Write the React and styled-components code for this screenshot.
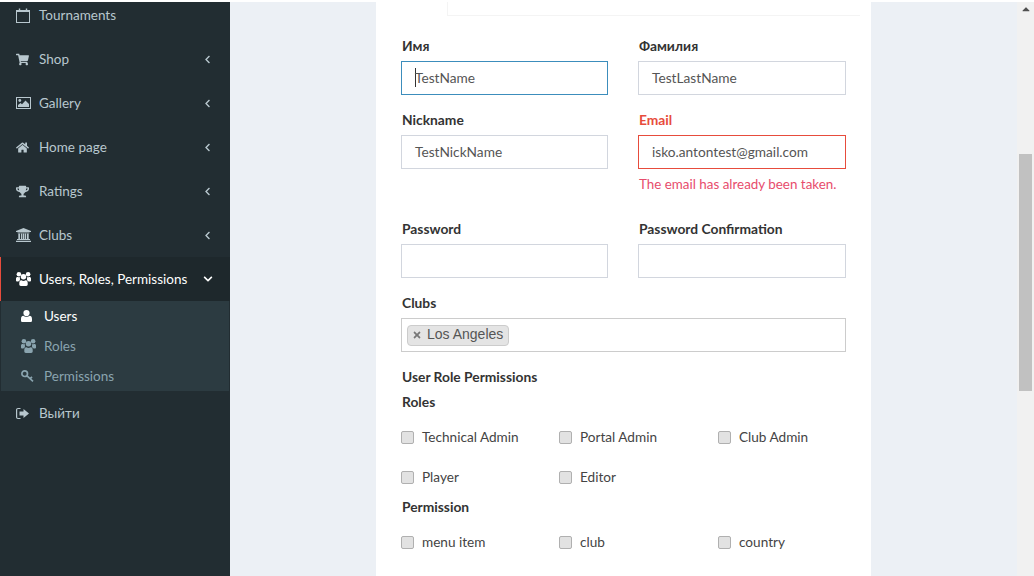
import React from 'react';
import styled, { createGlobalStyle } from 'styled-components';
import {
  FaShoppingCart,
  FaHome,
  FaTrophy,
  FaChevronLeft,
  FaChevronDown,
  FaTimes,
  FaCaretUp,
} from 'react-icons/fa';

const GlobalStyle = createGlobalStyle`
  html, body {
    margin: 0;
    height: 100%;
    overflow: hidden;
    background: #fff;
  }
  body {
    font-family: 'Lato', 'Noto Sans', sans-serif;
    font-size: 14px;
    color: #333;
  }
`;

const Page = styled.div`
  display: flex;
  flex-direction: column;
  width: 1034px;
  height: 576px;
  overflow: hidden;
`;

const Body = styled.div`
  display: flex;
  flex: 1;
  min-height: 0;
  margin-top: 2px;
`;

const Sidebar = styled.nav`
  width: 230px;
  flex-shrink: 0;
  background: #222d32;
`;

const MenuItem = styled.div`
  display: flex;
  align-items: center;
  box-sizing: border-box;
  height: 44px;
  padding-left: ${p => (p.active ? '15px' : '16px')};
  padding-right: 18px;
  border-left: ${p => (p.active ? '1px solid #e74c3c' : '0')};
  background: ${p => (p.active ? '#1e282c' : 'transparent')};
  color: ${p => (p.active ? '#fff' : '#b8c7ce')};
  font-size: 13.5px;
`;

const FirstItem = styled(MenuItem)`
  height: 35px;
  padding-bottom: 9px;
`;

const MenuIcon = styled.span`
  display: flex;
  align-items: center;
  width: 15px;
  margin-right: 8px;
  font-size: 13px;
`;

const MenuLabel = styled.span`
  flex: 1;
  white-space: nowrap;
`;

const Chevron = styled.span`
  display: flex;
  margin-right: ${p => p.mr || 0}px;
  font-size: ${p => p.size || 9}px;
`;

const SubMenu = styled.div`
  background: #2c3b41;
  margin: 0 1px;
`;

const SubItem = styled.div`
  display: flex;
  align-items: center;
  height: 30px;
  padding-left: 20px;
  color: ${p => (p.active ? '#fff' : '#8aa4af')};
  font-size: 13.5px;
`;

const SubIcon = styled.span`
  display: flex;
  align-items: center;
  width: 15px;
  margin-right: 8px;
`;

const Content = styled.main`
  flex: 1;
  background: #ecf0f5;
  padding: 0 146px;
  min-width: 0;
`;

const Card = styled.section`
  background: #fff;
  height: 100%;
  padding: 0 25px;
`;

const TabStrip = styled.div`
  height: 13px;
  margin: 0 -14px 0 46px;
  border-left: 1px solid #f4f4f4;
  border-bottom: 1px solid #f4f4f4;
`;

const FormGrid = styled.div`
  display: grid;
  grid-template-columns: 207px 208px;
  column-gap: 30px;
  margin-top: 20px;
`;

const Field = styled.div`
  margin-bottom: ${p => p.mb || 15}px;
`;

const Label = styled.label`
  display: block;
  padding-left: 1px;
  font-weight: 700;
  font-size: 13.8px;
  line-height: 20px;
  height: 20px;
  margin-bottom: 5px;
  color: ${p => (p.error ? '#e74c3c' : '#333')};
`;

const Input = styled.div`
  display: flex;
  align-items: center;
  box-sizing: border-box;
  height: 34px;
  padding: 0 12px 2px 13px;
  border: 1px solid ${p => p.border || '#d2d6de'};
  color: #555;
  font-size: 13.7px;
  white-space: nowrap;
`;

const Caret = styled.span`
  display: inline-block;
  width: 1px;
  height: 19px;
  margin-right: -1px;
  background: #333;
`;

const HelpText = styled.div`
  padding-left: 1px;
  font-size: 13.4px;
  line-height: 20px;
  margin-top: 5px;
  color: #e74c6c;
`;

const Select = styled.div`
  display: flex;
  align-items: center;
  box-sizing: border-box;
  height: 34px;
  padding: 0 5px;
  border: 1px solid #ccc;
`;

const Tag = styled.span`
  display: inline-flex;
  align-items: center;
  box-sizing: border-box;
  height: 21px;
  padding: 0 5px 2px 4px;
  background: #e4e4e4;
  border: 1px solid #ccc;
  border-radius: 4px;
  font-family: 'Liberation Sans', Arial, sans-serif;
  font-size: 14px;
  color: #555;
`;

const TagRemove = styled.span`
  display: flex;
  margin: 2px 5px 0 0;
  font-size: 10px;
  color: #777;
`;

const Heading = styled.div`
  padding-left: 1px;
  font-weight: 700;
  font-size: 13.8px;
  line-height: 20px;
  margin-top: ${p => p.mt || 0}px;
`;

const CheckGrid = styled.div`
  display: grid;
  grid-template-columns: 158px 159px 1fr;
  grid-auto-rows: 40px;
  margin-top: ${p => p.mt || 0}px;
`;

const CheckRow = styled.label`
  display: flex;
  align-items: center;
  font-size: 13.6px;
  color: #444;
`;

const Check = styled.span`
  box-sizing: border-box;
  width: 13px;
  height: 13px;
  margin-right: 8px;
  background: #e2e2e2;
  border: 1px solid #b0b0b0;
  border-radius: 2px;
`;

const CheckText = styled.span`
  margin-top: -1px;
`;

const Scrollbar = styled.aside`
  display: flex;
  flex-direction: column;
  align-items: center;
  width: 17px;
  flex-shrink: 0;
  background: #f1f1f1;
`;

const ScrollArrow = styled.span`
  display: flex;
  margin-top: 1px;
  font-size: 12px;
  color: #505050;
`;

const ScrollThumb = styled.span`
  width: 13px;
  height: 237px;
  margin-top: 139px;
  background: #c1c1c1;
`;

const CalendarIcon = () => (
  <svg width="14" height="15" viewBox="0 0 14 15" fill="none" stroke="currentColor">
    <rect x="0.5" y="2.5" width="13" height="12" />
    <path d="M0.500 3.500h13" />
    <path d="M3.500 0.500v3M10.500 0.500v3" strokeWidth="1.400" />
  </svg>
);

const PictureIcon = () => (
  <svg width="15" height="12" viewBox="0 0 15 12" fill="currentColor">
    <rect x="0.500" y="0.500" width="14" height="11" fill="none" stroke="currentColor" />
    <circle cx="3.800" cy="3.500" r="1.400" />
    <path d="M2 10V8l2.500-2 1.500 1.300L9.500 3.500 13 7v3z" />
  </svg>
);

const BankIcon = () => (
  <svg width="15" height="14" viewBox="0 0 15 14" fill="currentColor">
    <path d="M7.500 0 15 3v1H0V3z" />
    <path d="M1.500 4.500h12v.8h-12zM1 11h13v1H1zM0 12.700h15V14H0z" />
    <path d="M2.300 5.500h1.800V11H2.300zM5 5.500h1.300V11H5zM6.900 5.500h1.300V11H6.900zM8.800 5.500h1.300V11H8.800zM10.900 5.500h1.800V11h-1.800z" />
  </svg>
);

const UsersIcon = () => (
  <svg width="15" height="14" viewBox="0 0 15 14" fill="currentColor">
    <circle cx="2.900" cy="2.300" r="2.300" />
    <circle cx="12.100" cy="2.300" r="2.300" />
    <path d="M0 8.800V6.600C0 5.400.7 4.800 1.800 4.900c.5.300 1.300.6 2.400.4-.3.900-.5 2-.1 3C3.400 8.500 2.800 8.900 2.400 9.400H1C.4 9.400 0 9.200 0 8.800z" />
    <path d="M15 8.800V6.600c0-1.200-.7-1.800-1.800-1.700-.5.300-1.300.6-2.400.4.300.9.500 2 .1 3 .7.200 1.300.6 1.700 1.100H14c.6 0 1-.2 1-.6z" />
    <circle cx="7.500" cy="4.800" r="2.700" />
    <path d="M3.300 12.600v-1.800c0-1.700 1-2.700 2.100-2.500.6.400 1.300.7 2.100.7s1.500-.3 2.100-.7c1.100-.2 2.100.8 2.100 2.500v1.800c0 .9-.6 1.400-1.500 1.400H4.800c-.9 0-1.500-.5-1.500-1.400z" />
  </svg>
);

const UserIcon = () => (
  <svg width="11" height="12" viewBox="0 0 11 12" fill="currentColor">
    <circle cx="5.500" cy="3.100" r="3.100" />
    <path d="M0 10.400V9c0-2 1-3.200 2.400-3.200C3.200 6.500 4.300 7 5.500 7s2.300-.5 3.100-1.200C10 5.800 11 7 11 9v1.400c0 1-.7 1.600-1.600 1.600H1.600C.7 12 0 11.400 0 10.400z" />
  </svg>
);

const KeyIcon = () => (
  <svg width="13" height="12" viewBox="0 0 13 12" fill="none" stroke="currentColor" strokeWidth="1.700">
    <circle cx="3.700" cy="3.700" r="2.800" />
    <path d="M5.800 5.700 12 11.300M9.200 8.700l1.800-1.800" />
  </svg>
);

const SignOutIcon = () => (
  <svg width="13" height="11" viewBox="0 0 13 11" fill="currentColor">
    <path d="M4.500 0H2C.9 0 0 .9 0 2v7c0 1.100.9 2 2 2h2.500V10H2.200c-.6 0-1-.4-1-1V2c0-.6.4-1 1-1h2.300z" />
    <path d="M7.500 1 13 5.500 7.500 10V7.500H3.500v-4h4z" />
  </svg>
);

const menu = [
  [FaShoppingCart, 'Shop'],
  [PictureIcon, 'Gallery'],
  [FaHome, 'Home page'],
  [FaTrophy, 'Ratings'],
  [BankIcon, 'Clubs'],
];

const CheckItem = ({ children }) => (
  <CheckRow>
    <Check />
    <CheckText>{children}</CheckText>
  </CheckRow>
);

export default function App() {
  return (
    <Page>
      <GlobalStyle />
      <Body>
        <Sidebar>
          <FirstItem>
            <MenuIcon><CalendarIcon /></MenuIcon>
            <MenuLabel>Tournaments</MenuLabel>
          </FirstItem>
          {menu.map(([Icon, label]) => (
            <MenuItem key={label}>
              <MenuIcon><Icon /></MenuIcon>
              <MenuLabel>{label}</MenuLabel>
              <Chevron><FaChevronLeft /></Chevron>
            </MenuItem>
          ))}
          <MenuItem active>
            <MenuIcon><UsersIcon /></MenuIcon>
            <MenuLabel>Users, Roles, Permissions</MenuLabel>
            <Chevron size={10} mr={-1}><FaChevronDown /></Chevron>
          </MenuItem>
          <SubMenu>
            <SubItem active><SubIcon><UserIcon /></SubIcon>Users</SubItem>
            <SubItem><SubIcon><UsersIcon /></SubIcon>Roles</SubItem>
            <SubItem><SubIcon><KeyIcon /></SubIcon>Permissions</SubItem>
          </SubMenu>
          <MenuItem>
            <MenuIcon><SignOutIcon /></MenuIcon>
            <MenuLabel>Выйти</MenuLabel>
          </MenuItem>
        </Sidebar>
        <Content>
          <Card>
            <TabStrip />
            <FormGrid>
              <Field>
                <Label>Имя</Label>
                <Input border="#3c8dbc"><Caret />TestName</Input>
              </Field>
              <Field>
                <Label>Фамилия</Label>
                <Input>TestLastName</Input>
              </Field>
              <Field mb={25}>
                <Label>Nickname</Label>
                <Input>TestNickName</Input>
              </Field>
              <Field mb={25}>
                <Label error>Email</Label>
                <Input border="#e74c3c">isko.antontest@gmail.com</Input>
                <HelpText>The email has already been taken.</HelpText>
              </Field>
              <Field>
                <Label>Password</Label>
                <Input />
              </Field>
              <Field>
                <Label>Password Confirmation</Label>
                <Input />
              </Field>
            </FormGrid>
            <Field mb={15}>
              <Label>Clubs</Label>
              <Select>
                <Tag>
                  <TagRemove><FaTimes /></TagRemove>
                  Los Angeles
                </Tag>
              </Select>
            </Field>
            <Heading>User Role Permissions</Heading>
            <Heading mt={5}>Roles</Heading>
            <CheckGrid mt={5}>
              <CheckItem>Technical Admin</CheckItem>
              <CheckItem>Portal Admin</CheckItem>
              <CheckItem>Club Admin</CheckItem>
              <CheckItem>Player</CheckItem>
              <CheckItem>Editor</CheckItem>
            </CheckGrid>
            <Heading>Permission</Heading>
            <CheckGrid mt={5}>
              <CheckItem>menu item</CheckItem>
              <CheckItem>club</CheckItem>
              <CheckItem>country</CheckItem>
            </CheckGrid>
          </Card>
        </Content>
        <Scrollbar>
          <ScrollArrow><FaCaretUp /></ScrollArrow>
          <ScrollThumb />
        </Scrollbar>
      </Body>
    </Page>
  );
}
